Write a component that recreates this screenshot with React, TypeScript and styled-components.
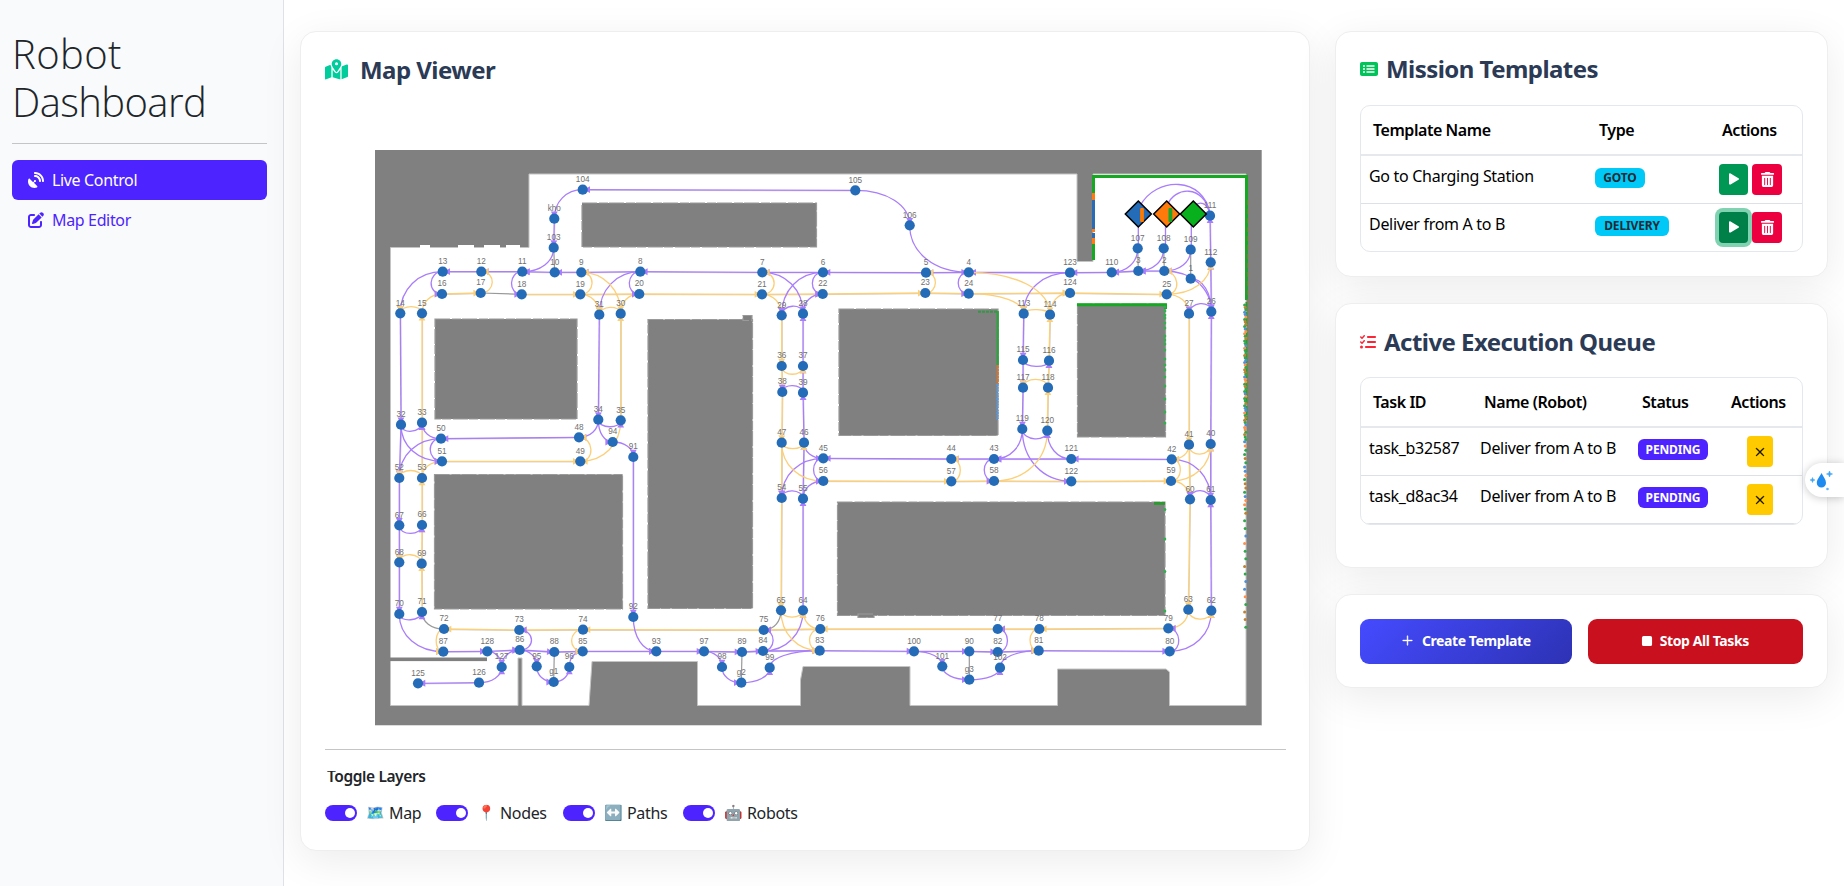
import React from "react";
import styled, { createGlobalStyle, css } from "styled-components";
import { FaMapLocationDot, FaSatelliteDish, FaPenToSquare, FaRectangleList, FaListCheck, FaTrashCan } from "react-icons/fa6";
import { BsPlayFill, BsStopFill, BsPlusLg, BsXLg } from "react-icons/bs";

const GlobalStyle = createGlobalStyle`
  *, *::before, *::after { box-sizing: border-box; }
  html, body, #root { height: 100%; }
  body {
    margin: 0;
    background: #fff;
    color: #212529;
    font-family: "Noto Sans", "Open Sans", sans-serif;
    font-size: 16px;
    line-height: 24px;
    overflow: hidden;
  }
`;

const Shell = styled.div`
  display: flex;
  height: 886px;
  width: 1844px;
  overflow: hidden;
  position: relative;
`;

const Sidebar = styled.aside`
  flex: 0 0 284px;
  padding: 30px 16px 0 12px;
  background: #f8fafc;
  border-right: 1px solid #dee2e6;
`;

const Brand = styled.h1`
  margin: 0;
  font: 300 40px/48px "Open Sans", "Noto Sans", sans-serif;
  letter-spacing: -0.6px;
`;

const BrandLine = styled.span<{ $track?: number }>`
  display: block;
  letter-spacing: ${(p) => p.$track ?? -0.6}px;
`;

const Rule = styled.hr<{ $gap: string }>`
  border: 0;
  border-top: 1px solid #c3c5c7;
  margin: ${(p) => p.$gap};
`;

const NavItem = styled.a<{ $active?: boolean }>`
  display: flex;
  align-items: center;
  gap: 8px;
  height: 40px;
  padding: 0 16px;
  border-radius: 6px;
  letter-spacing: -0.35px;
  color: ${(p) => (p.$active ? "#fff" : "#4d24ff")};
  background: ${(p) => (p.$active ? "#4d24ff" : "transparent")};
`;

const Main = styled.main`
  flex: 1;
  display: flex;
  gap: 25px;
  padding: 31px 16px 35px 16px;
`;

const Card = styled.section<{ $h: number }>`
  display: flex;
  flex-direction: column;
  height: ${(p) => p.$h}px;
  padding: 24px;
  background: #fff;
  border: 1px solid #eeeeef;
  border-radius: 16px;
  box-shadow: 0 10px 40px rgba(0, 0, 0, 0.08);
`;

const MapCard = styled(Card)`
  flex: 0 0 1010px;
  padding: 24px 23px 24px 24px;
`;

const Side = styled.div`
  flex: 0 0 493px;
  display: flex;
  flex-direction: column;
  gap: 26px;
`;

const CardTitle = styled.h2<{ $gap: number; $icon: string; $size: number }>`
  display: flex;
  align-items: center;
  gap: ${(p) => p.$gap}px;
  height: 29px;
  margin: 0;
  font-size: 24px;
  line-height: 29px;
  font-weight: 700;
  letter-spacing: -0.55px;
  color: #2b3a55;
  span { margin-top: -3px; }
  svg { color: ${(p) => p.$icon}; width: ${(p) => p.$size}px; height: ${(p) => p.$size}px; margin-top: -2px; }
`;

const MapArea = styled.div`
  margin: 65px 0 0 50px;
  width: 887px;
  height: 576px;
  svg { display: block; }
`;

const LayersTitle = styled.div`
  height: 18px;
  margin: 21px 0 0 2px;
  overflow: hidden;
  font-size: 15.5px;
  font-weight: 600;
  letter-spacing: -0.4px;
  line-height: 22px;
  span { display: block; margin-top: -6.5px; }
`;

const Toggles = styled.div`
  display: flex;
  margin-top: 12px;
`;

const Toggle = styled.label<{ $w: number }>`
  display: flex;
  align-items: center;
  width: ${(p) => p.$w}px;
  height: 24px;
  letter-spacing: -0.35px;
`;

const Switch = styled.span`
  display: flex;
  justify-content: flex-end;
  width: 32px;
  height: 16px;
  padding: 3px 2.5px;
  margin-right: 9px;
  border-radius: 8px;
  background: #4d24ff;
  &::after { content: ""; width: 10px; height: 10px; border-radius: 50%; background: #fff; }
`;

const Emoji = styled.span`
  width: 18px;
  margin-right: 5px;
  font: 15px/24px "Noto Color Emoji", sans-serif;
  letter-spacing: 0;
  white-space: nowrap;
`;

const Table = styled.div<{ $cols: string }>`
  margin-top: 20px;
  height: 148px;
  border: 1px solid #e4e8ec;
  border-radius: 10px;
  overflow: hidden;
  color: #000;
  display: grid;
  grid-template-rows: 50px 48px 48px;
  & > div { display: grid; grid-template-columns: ${(p) => p.$cols}; }
`;

const HeadRow = styled.div<{ $last?: number }>`
  border-bottom: 2px solid #e5e8ec;
  font-weight: 600;
  letter-spacing: -0.45px;
  line-height: 48px;
  span { padding-left: 12px; white-space: nowrap; }
  span:last-child { padding-left: ${(p) => p.$last ?? 12}px; }
`;

const Row = styled.div`
  border-bottom: 1px solid #dde1e5;
  letter-spacing: -0.3px;
`;

const Cell = styled.div`
  padding: 8px;
  white-space: nowrap;
  line-height: 24px;
`;

const Actions = styled.div<{ $pad: number }>`
  display: flex;
  gap: 4px;
  padding: 8px 0 0 ${(p) => p.$pad}px;
`;

const Badge = styled.span<{ $w: number; $pending?: boolean }>`
  display: block;
  width: ${(p) => p.$w}px;
  height: 20px;
  margin-top: 4px;
  border-radius: 6px;
  text-align: center;
  font-size: 12px;
  line-height: 20px;
  font-weight: 700;
  letter-spacing: -0.15px;
  ${(p) => p.$pending
    ? css`background: #4d24ff; color: #fff; margin-top: 3px; height: 21px; line-height: 21px;`
    : css`background: #00c9f8; color: #212b33;`}
`;

const tones = { go: "#009755", goDown: "#008049", del: "#ed0040", warn: "#ffca00" };

const IconButton = styled.button<{ $tone: keyof typeof tones; $w: number }>`
  display: flex;
  align-items: center;
  justify-content: center;
  width: ${(p) => p.$w}px;
  height: 31px;
  padding: 0;
  border: 0;
  border-radius: 4px;
  color: ${(p) => (p.$tone === "warn" ? "#000" : "#fff")};
  background: ${(p) => tones[p.$tone]};
  ${(p) => p.$tone === "goDown" && css`box-shadow: 0 0 0 4px #80d2b0;`}
`;

const ButtonCard = styled(Card)`
  flex-direction: row;
  gap: 16px;
`;

const BigButton = styled.button<{ $danger?: boolean }>`
  flex: 1;
  height: 45px;
  display: flex;
  align-items: center;
  justify-content: center;
  gap: ${(p) => (p.$danger ? 4 : 8)}px;
  padding: ${(p) => (p.$danger ? "0 4px 2px 0" : "0 0 2px")};
  border: 0;
  border-radius: 9px;
  color: #fff;
  font: 700 14px/20px "Noto Sans", sans-serif;
  letter-spacing: -0.4px;
  background: ${(p) => (p.$danger ? "#c9101e" : "linear-gradient(135deg, #454bff, #2d32b4)")};
`;

const Assistant = styled.div`
  position: absolute;
  right: 0;
  top: 463px;
  width: 39px;
  height: 34px;
  padding: 7px 0 0 4px;
  border-radius: 17px 0 0 17px;
  background: #fff;
  box-shadow: 0 1px 8px rgba(0, 0, 0, 0.22);
`;

type Pt = [number, number];

const nodes: Record<string, Pt> = {
  "104": [582.7, 189.7], kho: [554.3, 218.7], "103": [553.7, 247.7], "13": [442.7, 271.7], "12": [481.3, 271.7],
  "11": [522.3, 271.7], "10": [554.7, 272.3], "9": [581.3, 272.3], "8": [640.3, 271.7], "7": [762.3, 272.3],
  "16": [442, 294], "17": [480.7, 293], "18": [521.7, 294.3], "19": [580.3, 294.3], "20": [639.3, 294],
  "21": [762, 294.3], "14": [400.3, 313.3], "15": [422, 313.3], "31": [599.3, 314.7], "30": [620.7, 313.7],
  "29": [781.7, 315.3], "28": [803, 313.7], "36": [781.7, 366], "37": [803, 366], "38": [782.3, 392],
  "39": [803, 392.7], "32": [401, 424.7], "33": [422, 422.7], "34": [598.3, 419.7], "35": [620.7, 420.3],
  "50": [441, 438.7], "48": [579, 437.3], "94": [612.7, 442], "91": [633.3, 457], "51": [442, 461.3],
  "49": [580.3, 461.3], "52": [399.3, 478], "53": [422, 478], "67": [399.3, 525.3], "66": [422, 525],
  "68": [399.3, 562.3], "69": [421.7, 563.7], "70": [399.3, 614], "71": [422, 612], "72": [444, 629],
  "87": [443.3, 651.7], "128": [487.3, 651.3], "73": [519.3, 630], "86": [519.7, 650], "74": [583, 629.7],
  "85": [582.7, 651.3], "88": [554.3, 652], "95": [536.7, 666.3], "96": [569.3, 667], g1: [553.7, 682],
  "127": [501.7, 667], "126": [479, 682.7], "125": [418, 683.3], "92": [633.3, 617], "93": [656.3, 651.3],
  "97": [704, 651.3], "89": [742, 652], "84": [763, 651], "98": [722, 667], "99": [769.7, 667.7],
  g2: [741.3, 682.7], "75": [763.7, 630], "65": [781, 610.3], "64": [803, 610.3], "47": [781.7, 442.7],
  "46": [804, 442.7], "54": [781.7, 498], "55": [803, 498.7], "105": [855.3, 190.3], "106": [909.7, 225.3],
  "6": [823, 272.3], "22": [822.7, 294], "5": [926, 272.7], "23": [925.3, 293], "4": [968.7, 272.3],
  "24": [968.7, 293.7], "123": [1070, 272.7], "124": [1070, 293], "110": [1111.7, 272.3], "3": [1138.3, 271],
  "2": [1164.3, 271], "1": [1190.7, 278.7], "107": [1137.7, 248.3], "108": [1163.7, 248.3], "109": [1190.7, 249.7],
  "111": [1210, 215.7], "112": [1210.7, 262.3], "25": [1166.7, 294.3], "27": [1189, 313.7], "26": [1211.3, 311.7],
  "113": [1023.7, 313.7], "114": [1050, 314.7], "115": [1023, 360], "116": [1049, 360.7], "117": [1023, 387.7],
  "118": [1048, 387.7], "119": [1022.3, 429], "120": [1047.3, 430.7], "45": [823.3, 458.3], "56": [823.3, 481],
  "44": [951.3, 459], "57": [951.3, 481.3], "43": [994, 459], "58": [994, 481], "121": [1071.3, 459],
  "122": [1071.3, 481.3], "42": [1171.7, 459.3], "59": [1171, 481], "41": [1189, 444.7], "40": [1210.7, 444],
  "60": [1190, 499.3], "61": [1210.7, 500], "63": [1188.3, 609.7], "62": [1211.3, 610.7], "79": [1168.3, 628.3],
  "80": [1169.7, 651.3], "76": [820.3, 629], "83": [819.7, 650.7], "100": [914, 651.3], "90": [969.3, 651.3],
  "82": [997.7, 652], "81": [1038.7, 650.7], "77": [997.7, 629], "78": [1039.3, 629], "101": [942.3, 666.3],
  "102": [1000, 667.7], g3: [969.3, 679.7],
};

const robots: { id: string; at: Pt; fill: string; scan?: string }[] = [
  { id: "r1", at: [1138.3, 214], fill: "#246bb8", scan: "#ff7a00" },
  { id: "r2", at: [1166.7, 214], fill: "#ff7a0a", scan: "#18a62c" },
  { id: "r3", at: [1193.3, 214], fill: "#08b01e" },
];

const PURPLE = "#a97dfb";
const ORANGE = "#fccf78";
const GREY = "#999";

/* Chains of straight lanes, travelled left to right in each list. */
const lanes: [string, string][] = [
  [PURPLE, "105 104"], [PURPLE, "kho 103"],
  [PURPLE, "2 3 110 123 4 5 6 7 8 9 10 11 12 13"],
  [PURPLE, "14 32 52 67 68 70"],
  [PURPLE, "87 128 86 88 85 93 97 89 84 83 100 90 82 81 80"],
  [PURPLE, "62 61 40 26 112 111"],
  [ORANGE, "16 17"], [ORANGE, "18 19 20 21 22 23 24 124 25"],
  [ORANGE, "71 69 66 53 33 15"],
  [ORANGE, "79 78 77 76 75 74 73 72"],
  [ORANGE, "27 41 60 63"], [ORANGE, "51 49"], [PURPLE, "48 50"],
  [PURPLE, "91 92"], [PURPLE, "31 34"], [ORANGE, "35 30"],
  [ORANGE, "29 36 38 47 54 65"], [PURPLE, "64 55 46 39 37 28"],
  [PURPLE, "42 121 43 44 45"], [ORANGE, "56 57 58 122 59"],
  [PURPLE, "113 115 117 119"], [ORANGE, "120 118 116 114"],
  [PURPLE, "126 125"],
];

const spurs = "17 18,103 10,107 3,108 2,109 1,88 g1,89 g2,90 g3";

/* Quarter turns: H leaves the first node horizontally, V vertically. */
const turns: [string, "H" | "V", string][] = [
  [PURPLE, "H", "104 kho,105 106,13 14,80 62,50 52,50 33,8 31,7 28,6 29,45 54,84 64,94 91,121 120,123 113,2 26,42 61,1 26,128 127,126 127,86 95,g1 96,97 98,g2 99,100 101,g3 102"],
  [PURPLE, "V", "103 11,106 4,70 87,32 51,34 48,34 94,92 93,28 22,46 45,55 56,119 43,119 122,107 110,108 3,109 2,127 86,95 g1,96 85,98 g2,99 83,101 g3,102 81"],
  [ORANGE, "H", "25 27,9 30,19 31,21 29,58 120,4 114,24 113,25 112,59 40,59 60,76 64"],
  [ORANGE, "V", "15 16,63 79,53 51,35 49,30 20,47 56,65 83,114 124,41 42"],
  [GREY, "H", "72 71"],
  [GREY, "V", "65 75"],
];

/* Short connecting bows: colour, from, to, x bulge, y bulge. */
const bows: [string, string, string, number, number][] = [
  [PURPLE, "13", "16", -15, 0], [ORANGE, "17", "12", 15, 0], [PURPLE, "11", "18", -14, 0], [ORANGE, "19", "9", 15, 0],
  [PURPLE, "8", "20", -14, 0], [ORANGE, "21", "7", 16, 0], [PURPLE, "6", "22", -14, 0], [ORANGE, "23", "5", 13, 0],
  [PURPLE, "4", "24", -14, 0], [ORANGE, "25", "2", 15, 0], [PURPLE, "45", "56", -13, 0], [ORANGE, "57", "44", 12, 0],
  [PURPLE, "43", "58", -13, 0], [ORANGE, "59", "42", 12, 0], [PURPLE, "50", "51", -15, 0], [ORANGE, "49", "48", 15, 0],
  [ORANGE, "72", "87", -10, 0], [PURPLE, "86", "73", 16, 0], [ORANGE, "74", "85", -15, 0], [PURPLE, "84", "75", 13, 0],
  [ORANGE, "76", "83", -14, 0], [PURPLE, "82", "77", 13, 0], [ORANGE, "78", "81", -12, 0], [PURPLE, "80", "79", 13, 0],
  [ORANGE, "15", "14", 0, -9], [ORANGE, "30", "31", 0, -9], [PURPLE, "28", "29", 0, -11], [ORANGE, "36", "37", 0, 11],
  [PURPLE, "39", "38", 0, -9], [PURPLE, "32", "33", 0, 10], [PURPLE, "34", "35", 0, 9], [ORANGE, "47", "46", 0, 8],
  [PURPLE, "55", "54", 0, -10], [ORANGE, "53", "52", 0, -10], [PURPLE, "67", "66", 0, 11], [ORANGE, "69", "68", 0, -11],
  [PURPLE, "70", "71", 0, 9], [ORANGE, "65", "64", 0, 9], [ORANGE, "114", "113", 0, -6], [PURPLE, "115", "116", 0, 8],
  [ORANGE, "118", "117", 0, -11], [PURPLE, "119", "120", 0, 12], [ORANGE, "41", "40", 0, 13], [PURPLE, "61", "60", 0, -12],
  [PURPLE, "26", "27", 0, -12], [ORANGE, "63", "62", 0, 12],
];

const Head = ({ at, from, color }: { at: Pt; from: Pt; color: string }) => {
  const deg = (Math.atan2(from[1] - at[1], from[0] - at[0]) * 180) / Math.PI;
  return <path d="M1 0L7.3 -3.4V3.4Z" fill={color} transform={`translate(${at[0]} ${at[1]}) rotate(${deg})`} />;
};

const Curve = ({ a, b, c, d, color }: { a: Pt; b: Pt; c: Pt; d: Pt; color: string }) => (
  <g>
    <path d={`M${a}C${c} ${d} ${b}`} fill="none" stroke={color} strokeWidth={1.3} />
    {color !== GREY && <Head at={b} from={d} color={color} />}
  </g>
);

const mix = (p: number, q: number) => p + (q - p) * 0.58;

const palette = ["#2fa84c", "#ff8f4a", "#4f8fd6", "#2fa84c", "#c08030"];

const scanDots: React.ReactElement[] = [];
for (let y = 305, i = 0; y < 632; i++) {
  scanDots.push(<circle key={`r${i}`} cx={1244.6 + ((i * 7) % 3) * 0.6} cy={y} r={1.5} fill={palette[(i * 3 + (i % 4)) % 5]} />);
  y += y < 440 ? 2.4 : y < 510 ? 4.2 : 7.6;
}
[307, 311, 315, 318, 323, 328, 336, 340, 344, 350, 359, 365, 370, 377, 386, 399, 412, 423, 509.5, 539, 571.5, 611].forEach((y) =>
  scanDots.push(<circle key={`f${y}`} cx={1164.8} cy={y} r={1.5} fill="#2fb04c" />),
);

const obstacles: [number, number, number, number][] = [
  [582, 203, 234.5, 44], [435, 319, 142, 100], [648, 319.5, 104.5, 289], [434.5, 474.5, 188, 134.5],
  [839, 309, 159, 126.5], [1077.5, 304, 88, 133], [837.5, 502, 327.5, 113.5], [743, 315.5, 9, 5], [858, 614, 16, 3.5],
];

const FloorMap = () => (
  <svg width="887" height="576" viewBox="375 150 887 576">
    <rect x="375" y="150" width="886.7" height="575" fill="#808080" />
    <rect x="375" y="725" width="887" height="1" fill="#dcdcdc" />
    <path
      d="M390.5 247.5H529V174H1077V261.5H1093V174H1246V705.5H1169.5V672L1166 669H1057.5V705.5H910V666.5H803L800.5 680V705.5H697.5V661.5H592L589 705.5H522V658H518V705.5H390.5Z"
      fill="#fff" stroke="#c4c4c4" strokeWidth="1"
    />
    <path d="M420 246.500H430M458 246.500H474M484 246.500H500M506 246.500H520" stroke="#fff" strokeWidth="3" />
    <rect x="390" y="657.5" width="97" height="3.6" fill="#808080" />
    {obstacles.map(([x, y, w, h]) => (
      <g key={`${x}${y}`}>
        <rect x={x} y={y} width={w} height={h} fill="#808080" />
        <rect x={x} y={y} width={w} height={h} fill="none" stroke="#9a9a9a" strokeWidth="1.2" strokeDasharray="15 2 9 1" />
      </g>
    ))}
    <g fill="none" strokeWidth="3">
      <path d="M1092 176.5H1246.5V300" stroke="#17a823" />
      <path d="M1246.5 250V420" stroke="#2a9a35" strokeWidth="2" strokeDasharray="9 1 14 2" />
      <path d="M1248 200V400" stroke="#a07a3a" strokeWidth="0.8" strokeDasharray="5 4" />
      <path d="M1093.5 176V193M1093.5 244V260" stroke="#17a823" />
      <path d="M1093.5 193V200M1093.5 229V232M1093.5 238V244" stroke="#ff7a10" />
      <path d="M1093.5 200V229M1093.5 233V238" stroke="#2a6bb5" />
      <path d="M978 311.8H997" stroke="#2f9a3e" strokeWidth="2" strokeDasharray="3 1" />
      <path d="M997.7 311V365" stroke="#2da23e" strokeWidth="2.4" />
      <path d="M997.7 365V384" stroke="#c9783c" strokeWidth="2.4" strokeDasharray="3 0.5" />
      <path d="M997.5 384V420" stroke="#5a98d8" strokeWidth="2.4" strokeDasharray="2 0.8" />
      <path d="M1077 304.8H1165.5V309" stroke="#17a823" />
      <path d="M1154 503.4H1165" stroke="#2c9a30" />
    </g>
    {scanDots}
    {spurs.split(",").map((s) => {
      const [a, b] = s.split(" ").map((n) => nodes[n]);
      return <path key={s} d={`M${a}L${b}`} stroke={GREY} strokeWidth="1.2" />;
    })}
    {lanes.map(([color, chain]) => {
      const ids = chain.split(" ");
      return ids.slice(1).map((id, i) => {
        const a = nodes[ids[i]];
        const b = nodes[id];
        return (
          <g key={`${ids[i]}-${id}`}>
            <path d={`M${a}L${b}`} stroke="#8d8d8d" strokeWidth="1" opacity="0.4" transform="translate(.6 .6)" />
            <path d={`M${a}L${b}`} stroke={color} strokeWidth="1.3" />
            <Head at={b} from={a} color={color} />
          </g>
        );
      });
    })}
    {turns.map(([color, dir, list]) =>
      list.split(",").map((s) => {
        const [a, b] = s.split(" ").map((n) => nodes[n]);
        const c: Pt = dir === "H" ? [mix(a[0], b[0]), a[1]] : [a[0], mix(a[1], b[1])];
        const d: Pt = dir === "H" ? [b[0], mix(b[1], a[1])] : [mix(b[0], a[0]), b[1]];
        return <Curve key={s} a={a} b={b} c={c} d={d} color={color} />;
      }),
    )}
    {bows.map(([color, from, to, dx, dy]) => {
      const a = nodes[from];
      const b = nodes[to];
      return <Curve key={`${from}~${to}`} a={a} b={b} c={[a[0] + dx, a[1] + dy]} d={[b[0] + dx, b[1] + dy]} color={color} />;
    })}
    <g fill="none" stroke={PURPLE} strokeWidth="1.3">
      <path d="M1210 214C1204 176 1156 176 1140 206" />
      <path d="M1210 214C1204 184 1174 186 1167 206" />
      <path d="M1210 214C1207 202 1200 201 1194 206" />
      <path d="M1138.3 214V248M1165.5 214V248M1191.3 214V249" />
    </g>
    <g fill="#246bb8">
      {Object.entries(nodes).map(([id, [x, y]]) => <circle key={id} cx={x} cy={y} r="5.1" />)}
    </g>
    <g fill="#707070" fontFamily="'Liberation Sans', sans-serif" fontSize="8.2" textAnchor="middle">
      {Object.entries(nodes).map(([id, [x, y]]) => <text key={id} x={x} y={y - 7.6}>{id}</text>)}
    </g>
    {robots.map(({ id, at: [x, y], fill, scan }) => (
      <g key={id}>
        <path d={`M${x} ${y - 13}L${x + 13} ${y}L${x} ${y + 13}L${x - 13} ${y}Z`} fill={fill} stroke="#000" strokeWidth="1.5" />
        {scan && <rect x={x + 1.8} y={y - 6} width="3.8" height="14" rx="1" fill={scan} />}
      </g>
    ))}
  </svg>
);

const layers = [
  { name: "Map", emoji: "🗺️", w: 111 },
  { name: "Nodes", emoji: "📍", w: 127 },
  { name: "Paths", emoji: "↔️", w: 120 },
  { name: "Robots", emoji: "🤖", w: 130 },
];

const templates = [
  { name: "Go to Charging Station", type: "GOTO", w: 50, pressed: false },
  { name: "Deliver from A to B", type: "DELIVERY", w: 74, pressed: true },
];

const tasks = ["task_b32587", "task_d8ac34"];

export default function App() {
  return (
    <Shell>
      <GlobalStyle />
      <Sidebar>
        <Brand><BrandLine $track={0.4}>Robot</BrandLine><BrandLine>Dashboard</BrandLine></Brand>
        <Rule $gap="17px 0 16px" />
        <NavItem $active><FaSatelliteDish />Live Control</NavItem>
        <NavItem><FaPenToSquare />Map Editor</NavItem>
      </Sidebar>
      <Main>
        <MapCard $h={820}>
          <CardTitle $gap={12} $icon="#00cc9c" $size={23}><FaMapLocationDot /><span>Map Viewer</span></CardTitle>
          <MapArea><FloorMap /></MapArea>
          <Rule $gap="23px 0 0" />
          <LayersTitle><span>Toggle Layers</span></LayersTitle>
          <Toggles>
            {layers.map((l) => (
              <Toggle key={l.name} $w={l.w}><Switch /><Emoji>{l.emoji}</Emoji>{l.name}</Toggle>
            ))}
          </Toggles>
        </MapCard>
        <Side>
          <Card $h={246}>
            <CardTitle $gap={8} $icon="#00c45a" $size={18}><FaRectangleList /><span>Mission Templates</span></CardTitle>
            <Table $cols="226px 117px 1fr">
              <HeadRow $last={18}><span>Template Name</span><span>Type</span><span>Actions</span></HeadRow>
              {templates.map((t) => (
                <Row key={t.name}>
                  <Cell>{t.name}</Cell>
                  <Cell><Badge $w={t.w}>{t.type}</Badge></Cell>
                  <Actions $pad={15}>
                    <IconButton $w={29} $tone={t.pressed ? "goDown" : "go"}><BsPlayFill size={20} /></IconButton>
                    <IconButton $w={30} $tone="del"><FaTrashCan size={15} /></IconButton>
                  </Actions>
                </Row>
              ))}
            </Table>
          </Card>
          <Card $h={265}>
            <CardTitle $gap={8} $icon="#fb2536" $size={16}><FaListCheck /><span>Active Execution Queue</span></CardTitle>
            <Table $cols="111px 158px 89px 1fr">
              <HeadRow><span>Task ID</span><span>Name (Robot)</span><span>Status</span><span>Actions</span></HeadRow>
              {tasks.map((id) => (
                <Row key={id}>
                  <Cell>{id}</Cell>
                  <Cell>Deliver from A to B</Cell>
                  <Cell><Badge $w={70} $pending>PENDING</Badge></Cell>
                  <Actions $pad={28}><IconButton $w={26} $tone="warn"><BsXLg size={10} stroke="#000" strokeWidth={1.2} /></IconButton></Actions>
                </Row>
              ))}
            </Table>
          </Card>
          <ButtonCard $h={94}>
            <BigButton><BsPlusLg size={13} stroke="#fff" strokeWidth={0.6} />Create Template</BigButton>
            <BigButton $danger><BsStopFill size={18} />Stop All Tasks</BigButton>
          </ButtonCard>
        </Side>
      </Main>
      <Assistant>
        <svg width="26" height="22" viewBox="0 0 26 22">
          <path d="M12.5 3C14.5 7 17 9.500 17 13A4.600 4.600 0 0 1 7.800 13C7.800 9.500 10.500 7 12.500 3Z" fill="#1e8bf0" />
          <path d="M20.500 1L21.300 3.200L23.500 4L21.300 4.800L20.500 7L19.700 4.800L17.500 4L19.700 3.200Z" fill="#3fa4f5" stroke="#3fa4f5" strokeWidth=".6" />
          <path d="M3.500 7.500L4.200 9.300L6 10L4.200 10.700L3.500 12.500L2.800 10.700L1 10L2.800 9.300Z" fill="#3fa4f5" stroke="#3fa4f5" strokeWidth=".5" />
          <circle cx="18.500" cy="19" r="1.300" fill="#5db4f8" />
        </svg>
      </Assistant>
    </Shell>
  );
}
